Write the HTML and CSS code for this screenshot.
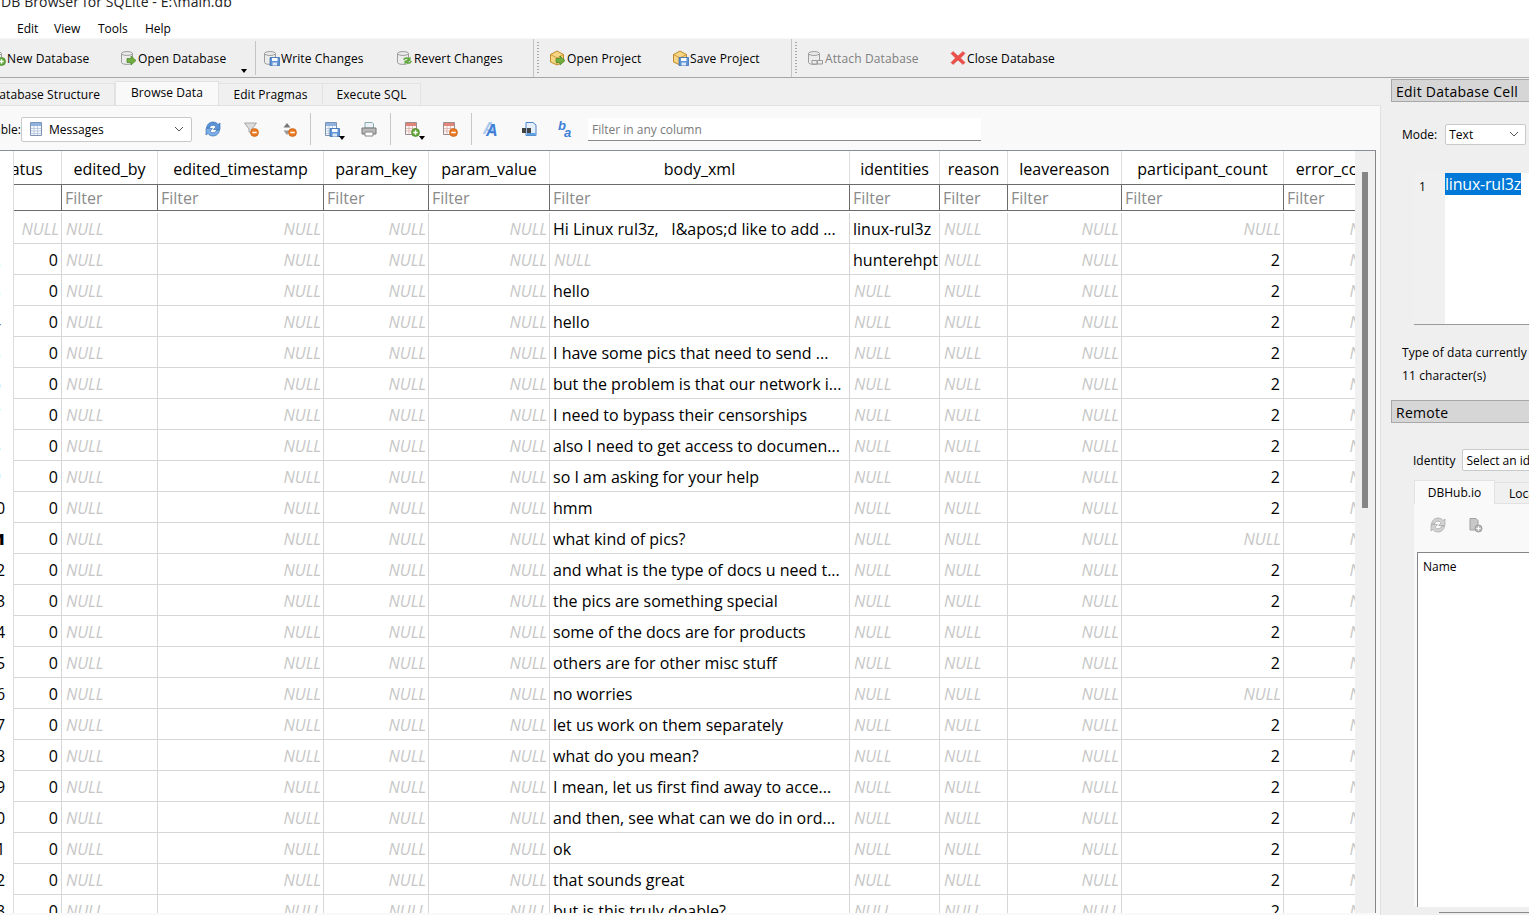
FILE: index.html
```html
<!DOCTYPE html>
<html lang="en">
<head>
<meta charset="utf-8">
<title>DB Browser for SQLite - E:\main.db</title>
<link rel="stylesheet" href="styles.css">
</head>
<body>
<svg class="defs" width="0" height="0" aria-hidden="true">
  <symbol id="cyl" viewBox="0 0 16 16"><path d="M.5 3.500C.5 1 11.500 1 11.500 3.500V12.500C11.500 15 .5 15 .5 12.500Z" fill="#ececec" stroke="#9c9c9c"/><path d="M.5 3.500C.5 6 11.500 6 11.500 3.500" fill="none" stroke="#9c9c9c"/></symbol>
  <symbol id="greenarrow" viewBox="0 0 16 16"><path d="M6 8.500H10V6L15 10.500L10 15V12.500H6Z" fill="#6fae3f" stroke="#4a8526" stroke-width=".7"/></symbol>
  <symbol id="floppy" viewBox="0 0 16 16"><path d="M6 7.500H15.500V15.500H6Z" fill="#5f94d6" stroke="#2f65ab" stroke-width=".7"/><path d="M8 8H13.500V11H8Z" fill="#fff"/><path d="M8.500 12.500H13V15.500H8.500Z" fill="#dfe9f5"/></symbol>
  <symbol id="box" viewBox="0 0 16 16"><path d="M.5 4.500L7 1L13.500 4.500V12L7 15L.5 12Z" fill="#f5d583" stroke="#c08a2b"/><path d="M.5 4.500L7 8L13.500 4.500M7 8V15" fill="none" stroke="#c08a2b" stroke-width=".8"/></symbol>
  <symbol id="tbl" viewBox="0 0 16 16"><path d="M1.500 1.500H12.500V14.500H1.500Z" fill="#f4f7fb" stroke="#7c93b2"/><path d="M2 2H12V5H2Z" fill="#8fb3de"/><path d="M2 7.500H12M2 10H12M2 12.500H12M5 5V14M8.500 5V14" stroke="#a9bdd6" stroke-width=".7"/></symbol>
  <symbol id="rtbl" viewBox="0 0 16 16"><path d="M1.500 1.500H12.500V13.500H1.500Z" fill="#fdf6f4" stroke="#9a8d8d"/><path d="M2 2H12V5H2Z" fill="#e2857a"/><path d="M2 7.500H12M2 10H12M5 5V13M8.500 5V13" stroke="#d3aaa5" stroke-width=".7"/></symbol>
  <symbol id="plus" viewBox="0 0 16 16"><circle cx="11.500" cy="11.500" r="4" fill="#63a83a" stroke="#3f7d20" stroke-width=".6"/><path d="M9.300 11.500H13.700M11.500 9.300V13.700" stroke="#fff" stroke-width="1.400"/></symbol>
  <symbol id="minus" viewBox="0 0 16 16"><circle cx="11.500" cy="11.500" r="4" fill="#ec7a22" stroke="#c05a10" stroke-width=".6"/><path d="M9.300 11.500H13.700" stroke="#fff" stroke-width="1.500"/></symbol>
  <symbol id="refresh" viewBox="0 0 16 16"><path d="M1.500 7C2 3 5 1 8 1C10.500 1 12 2 13 3.500L15 2V8.500H8.500L11 6C10.300 5 9.500 4.200 8 4.200C6.200 4.200 4.800 5.300 4.500 7Z" fill="#5b93d8" stroke="#2d66ad" stroke-width=".6"/><path d="M14.500 9C14 13 11 15 8 15C5.500 15 4 14 3 12.500L1 14V7.500H7.500L5 10C5.700 11 6.500 11.800 8 11.800C9.800 11.800 11.200 10.700 11.500 9Z" fill="#7aaee6" stroke="#2d66ad" stroke-width=".6"/></symbol>
  <symbol id="grefresh" viewBox="0 0 16 16"><path d="M1.500 7C2 3 5 1 8 1C10.500 1 12 2 13 3.500L15 2V8.500H8.500L11 6C10.300 5 9.500 4.200 8 4.200C6.200 4.200 4.800 5.300 4.500 7Z" fill="#d2d2d2" stroke="#9a9a9a" stroke-width=".6"/><path d="M14.500 9C14 13 11 15 8 15C5.500 15 4 14 3 12.500L1 14V7.500H7.500L5 10C5.700 11 6.500 11.800 8 11.800C9.800 11.800 11.200 10.700 11.500 9Z" fill="#d2d2d2" stroke="#9a9a9a" stroke-width=".6"/></symbol>
</svg>

<div class="app">
  <div class="titlebar">DB Browser for SQLite - E:\main.db</div>
  <div class="menubar"><span>Edit</span><span>View</span><span>Tools</span><span>Help</span></div>

  <div class="toolbar">
    <div class="tool"><svg class="ic"><use href="#cyl"/><use href="#plus"/></svg>New Database</div>
    <div class="tool"><svg class="ic"><use href="#cyl"/><use href="#greenarrow"/></svg>Open Database</div>
    <div class="drop"><i class="caret"></i></div>
    <div class="sep"></div>
    <div class="tool"><svg class="ic"><use href="#cyl"/><use href="#floppy"/></svg>Write Changes</div>
    <div class="tool"><svg class="ic"><use href="#cyl"/><path d="M6 9.500C7 7 10 6.500 12 8L13.500 6.500V11H9L10.500 9.500C9.500 8.800 8 9 7.500 10Z" fill="#5fa83a"/><path d="M15 11C14 14 11 14.500 9 13L7.500 14.500V10.500H12L10.500 12C11.500 12.700 12.800 12.300 13.300 11Z" fill="#5fa83a"/></svg>Revert Changes</div>
    <div class="sep handle"></div>
    <div class="tool"><svg class="ic"><use href="#box"/><use href="#greenarrow"/></svg>Open Project</div>
    <div class="tool"><svg class="ic"><use href="#box"/><use href="#floppy"/></svg>Save Project</div>
    <div class="sep handle"></div>
    <div class="tool off"><svg class="ic"><use href="#cyl"/><path d="M4 10.500H9V14H4ZM9.500 10.500H14.500V14H9.500Z" fill="#eee" stroke="#999"/></svg>Attach Database</div>
    <div class="tool"><svg class="ic"><path d="M3 1.500L8 6L13 1.500L15 3.500L10.500 8L15 12.500L13 14.500L8 10L3 14.500L1 12.500L5.500 8L1 3.500Z" fill="#ee4f4a" stroke="#d33a35" stroke-width=".5"/></svg>Close Database</div>
  </div>

  <div class="main">
    <div class="left">
      <div class="tabs">
        <div class="tab t-struct">Database Structure</div>
        <div class="tab active t-browse">Browse Data</div>
        <div class="tab t-prag">Edit Pragmas</div>
        <div class="tab t-sql">Execute SQL</div>
      </div>
      <div class="page">
        <div class="subbar">
          <span class="tlabel">Table:</span>
          <div class="combo c-table"><svg class="ic"><use href="#tbl"/></svg><span class="grow">Messages</span><svg class="chev" viewBox="0 0 10 6"><path d="M1 1L5 5L9 1" fill="none" stroke="#555"/></svg></div>
          <div class="sb s-a"><svg class="ic"><use href="#refresh"/></svg></div>
          <div class="sb s-b"><svg class="ic"><path d="M1.500 2H13.500L9 8V13L6 11V8Z" fill="#dcdcdc" stroke="#a6a6a6"/><use href="#minus"/></svg></div>
          <div class="sb s-c"><svg class="ic"><path d="M6 2L9.500 6.500H2.500Z" fill="#777"/><path d="M6 14L9.500 9.500H2.500Z" fill="#999"/><use href="#minus"/></svg></div>
          <div class="vsep"></div>
          <div class="sb s-d"><svg class="ic"><use href="#tbl"/><use href="#floppy"/></svg><i class="caret under"></i></div>
          <div class="sb s-e"><svg class="ic"><path d="M4 1.500H11L12.500 3V7H4Z" fill="#eef3f9" stroke="#8aa"/><path d="M1 7H15V13H1Z" fill="#b8b8b8" stroke="#777"/><path d="M4 11H12V15H4Z" fill="#fff" stroke="#888"/></svg></div>
          <div class="vsep"></div>
          <div class="sb s-f"><svg class="ic"><use href="#rtbl"/><use href="#plus"/></svg><i class="caret under"></i></div>
          <div class="sb s-g"><svg class="ic"><use href="#rtbl"/><use href="#minus"/></svg></div>
          <div class="vsep"></div>
          <div class="sb s-h"><svg class="ic" viewBox="0 0 16 16"><text x="-1" y="13" class="ictext back">A</text><text x="2" y="15" class="ictext">A</text></svg></div>
          <div class="sb s-i"><svg class="ic"><path d="M5 1.500H12L15 4V14.500H5Z" fill="#e6f0fa" stroke="#4d86c8"/><path d="M6 12H14.500V14.500H6Z" fill="#5fa0e0"/><path d="M1 7H5V12H1ZM6 7H10V12H6Z" fill="#444"/></svg></div>
          <div class="sb s-j"><svg class="ic" viewBox="0 0 16 16"><text x="0" y="9" class="ictext sm">b</text><text x="6" y="16" class="ictext sm">a</text></svg></div>
          <input class="filter-any" placeholder="Filter in any column">
        </div>

        <div class="gridframe">
          <div class="rowhead">
            <div class="rh-top"></div>
            <div class="rh">1</div><div class="rh">2</div><div class="rh">3</div><div class="rh">4</div><div class="rh">5</div><div class="rh">6</div><div class="rh">7</div><div class="rh">8</div><div class="rh">9</div><div class="rh">10</div><div class="rh cur">11</div><div class="rh">12</div><div class="rh">13</div><div class="rh">14</div><div class="rh">15</div><div class="rh">16</div><div class="rh">17</div><div class="rh">18</div><div class="rh">19</div><div class="rh">20</div><div class="rh">21</div><div class="rh">22</div><div class="rh">23</div>
          </div>
          <div class="viewport">
            <table class="grid">
              <colgroup><col class="c1"><col class="c2"><col class="c3"><col class="c4"><col class="c5"><col class="c6"><col class="c7"><col class="c8"><col class="c9"><col class="c10"><col class="c11"></colgroup>
              <thead>
                <tr class="hd"><th>status</th><th>edited_by</th><th>edited_timestamp</th><th>param_key</th><th>param_value</th><th>body_xml</th><th>identities</th><th>reason</th><th>leavereason</th><th>participant_count</th><th>error_code</th></tr>
                <tr class="fl"><td></td><td><input placeholder="Filter"></td><td><input placeholder="Filter"></td><td><input placeholder="Filter"></td><td><input placeholder="Filter"></td><td><input placeholder="Filter"></td><td><input placeholder="Filter"></td><td><input placeholder="Filter"></td><td><input placeholder="Filter"></td><td><input placeholder="Filter"></td><td><input placeholder="Filter"></td></tr>
                <tr class="gap"><td colspan="11"></td></tr>
              </thead>
              <tbody>
                <tr><td class="r n">NULL</td><td class="n">NULL</td><td class="r n">NULL</td><td class="r n">NULL</td><td class="r n">NULL</td><td>Hi Linux rul3z, &nbsp; I&amp;apos;d like to add ...</td><td>linux-rul3z</td><td class="n">NULL</td><td class="r n">NULL</td><td class="r n">NULL</td><td class="r n">NULL</td></tr>
                <tr><td class="r">0</td><td class="n">NULL</td><td class="r n">NULL</td><td class="r n">NULL</td><td class="r n">NULL</td><td class="n">NULL</td><td>hunterehpt</td><td class="n">NULL</td><td class="r n">NULL</td><td class="r">2</td><td class="r n">NULL</td></tr>
                <tr><td class="r">0</td><td class="n">NULL</td><td class="r n">NULL</td><td class="r n">NULL</td><td class="r n">NULL</td><td>hello</td><td class="n">NULL</td><td class="n">NULL</td><td class="r n">NULL</td><td class="r">2</td><td class="r n">NULL</td></tr>
                <tr><td class="r">0</td><td class="n">NULL</td><td class="r n">NULL</td><td class="r n">NULL</td><td class="r n">NULL</td><td>hello</td><td class="n">NULL</td><td class="n">NULL</td><td class="r n">NULL</td><td class="r">2</td><td class="r n">NULL</td></tr>
                <tr><td class="r">0</td><td class="n">NULL</td><td class="r n">NULL</td><td class="r n">NULL</td><td class="r n">NULL</td><td>I have some pics that need to send ...</td><td class="n">NULL</td><td class="n">NULL</td><td class="r n">NULL</td><td class="r">2</td><td class="r n">NULL</td></tr>
                <tr><td class="r">0</td><td class="n">NULL</td><td class="r n">NULL</td><td class="r n">NULL</td><td class="r n">NULL</td><td>but the problem is that our network i...</td><td class="n">NULL</td><td class="n">NULL</td><td class="r n">NULL</td><td class="r">2</td><td class="r n">NULL</td></tr>
                <tr><td class="r">0</td><td class="n">NULL</td><td class="r n">NULL</td><td class="r n">NULL</td><td class="r n">NULL</td><td>I need to bypass their censorships</td><td class="n">NULL</td><td class="n">NULL</td><td class="r n">NULL</td><td class="r">2</td><td class="r n">NULL</td></tr>
                <tr><td class="r">0</td><td class="n">NULL</td><td class="r n">NULL</td><td class="r n">NULL</td><td class="r n">NULL</td><td>also I need to get access to documen...</td><td class="n">NULL</td><td class="n">NULL</td><td class="r n">NULL</td><td class="r">2</td><td class="r n">NULL</td></tr>
                <tr><td class="r">0</td><td class="n">NULL</td><td class="r n">NULL</td><td class="r n">NULL</td><td class="r n">NULL</td><td>so I am asking for your help</td><td class="n">NULL</td><td class="n">NULL</td><td class="r n">NULL</td><td class="r">2</td><td class="r n">NULL</td></tr>
                <tr><td class="r">0</td><td class="n">NULL</td><td class="r n">NULL</td><td class="r n">NULL</td><td class="r n">NULL</td><td>hmm</td><td class="n">NULL</td><td class="n">NULL</td><td class="r n">NULL</td><td class="r">2</td><td class="r n">NULL</td></tr>
                <tr><td class="r">0</td><td class="n">NULL</td><td class="r n">NULL</td><td class="r n">NULL</td><td class="r n">NULL</td><td>what kind of pics?</td><td class="n">NULL</td><td class="n">NULL</td><td class="r n">NULL</td><td class="r n">NULL</td><td class="r n">NULL</td></tr>
                <tr><td class="r">0</td><td class="n">NULL</td><td class="r n">NULL</td><td class="r n">NULL</td><td class="r n">NULL</td><td>and what is the type of docs u need t...</td><td class="n">NULL</td><td class="n">NULL</td><td class="r n">NULL</td><td class="r">2</td><td class="r n">NULL</td></tr>
                <tr><td class="r">0</td><td class="n">NULL</td><td class="r n">NULL</td><td class="r n">NULL</td><td class="r n">NULL</td><td>the pics are something special</td><td class="n">NULL</td><td class="n">NULL</td><td class="r n">NULL</td><td class="r">2</td><td class="r n">NULL</td></tr>
                <tr><td class="r">0</td><td class="n">NULL</td><td class="r n">NULL</td><td class="r n">NULL</td><td class="r n">NULL</td><td>some of the docs are for products</td><td class="n">NULL</td><td class="n">NULL</td><td class="r n">NULL</td><td class="r">2</td><td class="r n">NULL</td></tr>
                <tr><td class="r">0</td><td class="n">NULL</td><td class="r n">NULL</td><td class="r n">NULL</td><td class="r n">NULL</td><td>others are for other misc stuff</td><td class="n">NULL</td><td class="n">NULL</td><td class="r n">NULL</td><td class="r">2</td><td class="r n">NULL</td></tr>
                <tr><td class="r">0</td><td class="n">NULL</td><td class="r n">NULL</td><td class="r n">NULL</td><td class="r n">NULL</td><td>no worries</td><td class="n">NULL</td><td class="n">NULL</td><td class="r n">NULL</td><td class="r n">NULL</td><td class="r n">NULL</td></tr>
                <tr><td class="r">0</td><td class="n">NULL</td><td class="r n">NULL</td><td class="r n">NULL</td><td class="r n">NULL</td><td>let us work on them separately</td><td class="n">NULL</td><td class="n">NULL</td><td class="r n">NULL</td><td class="r">2</td><td class="r n">NULL</td></tr>
                <tr><td class="r">0</td><td class="n">NULL</td><td class="r n">NULL</td><td class="r n">NULL</td><td class="r n">NULL</td><td>what do you mean?</td><td class="n">NULL</td><td class="n">NULL</td><td class="r n">NULL</td><td class="r">2</td><td class="r n">NULL</td></tr>
                <tr><td class="r">0</td><td class="n">NULL</td><td class="r n">NULL</td><td class="r n">NULL</td><td class="r n">NULL</td><td>I mean, let us first find away to acce...</td><td class="n">NULL</td><td class="n">NULL</td><td class="r n">NULL</td><td class="r">2</td><td class="r n">NULL</td></tr>
                <tr><td class="r">0</td><td class="n">NULL</td><td class="r n">NULL</td><td class="r n">NULL</td><td class="r n">NULL</td><td>and then, see what can we do in ord...</td><td class="n">NULL</td><td class="n">NULL</td><td class="r n">NULL</td><td class="r">2</td><td class="r n">NULL</td></tr>
                <tr><td class="r">0</td><td class="n">NULL</td><td class="r n">NULL</td><td class="r n">NULL</td><td class="r n">NULL</td><td>ok</td><td class="n">NULL</td><td class="n">NULL</td><td class="r n">NULL</td><td class="r">2</td><td class="r n">NULL</td></tr>
                <tr><td class="r">0</td><td class="n">NULL</td><td class="r n">NULL</td><td class="r n">NULL</td><td class="r n">NULL</td><td>that sounds great</td><td class="n">NULL</td><td class="n">NULL</td><td class="r n">NULL</td><td class="r">2</td><td class="r n">NULL</td></tr>
                <tr><td class="r">0</td><td class="n">NULL</td><td class="r n">NULL</td><td class="r n">NULL</td><td class="r n">NULL</td><td>but is this truly doable?</td><td class="n">NULL</td><td class="n">NULL</td><td class="r n">NULL</td><td class="r">2</td><td class="r n">NULL</td></tr>
              </tbody>
            </table>
          </div>
          <div class="vscroll"><div class="thumb"></div></div>
        </div>
      </div>
    </div>

    <aside class="dock">
      <div class="docktitle first">Edit Database Cell</div>
      <div class="moderow"><span>Mode:</span><div class="combo c-mode"><span class="grow">Text</span><svg class="chev" viewBox="0 0 10 6"><path d="M1 1L5 5L9 1" fill="none" stroke="#555"/></svg></div></div>
      <div class="editor"><div class="gutter">1</div><div class="code"><span class="sel">linux-rul3z</span></div></div>
      <div class="info"><div>Type of data currently in cell: Text / Numeric</div><div>11 character(s)</div></div>
      <div class="docktitle remote">Remote</div>
      <div class="identrow"><span>Identity</span><div class="combo c-ident">Select an identity to connect</div></div>
      <div class="rtabs"><div class="rtab active">DBHub.io</div><div class="rtab">Local</div></div>
      <div class="rpane">
        <div class="ricons"><svg class="ic"><use href="#grefresh"/></svg><svg class="ic"><path d="M3 1.500H9L11 3.500V13H3Z" fill="#c8c8c8" stroke="#a0a0a0"/><circle cx="11.500" cy="11.500" r="3.500" fill="#bdbdbd" stroke="#999"/><path d="M9.500 11.500H13.500M11.500 9.500V13.500" stroke="#fff"/></svg></div>
        <div class="rlist"><div class="rhead">Name</div></div>
      </div>
      <div class="rfoot"></div>
    </aside>
  </div>
</div>
</body>
</html>
```
FILE: styles.css
```css
* { box-sizing: border-box; }
html, body { margin: 0; padding: 0; }
body { width: 1529px; height: 915px; overflow: hidden; background: #fff; font-family: "Open Sans", "Noto Sans", sans-serif; font-size: 12px; color: #000; }
.defs { position: absolute; }
.app { width: 1529px; height: 915px; display: flex; flex-direction: column; overflow: hidden; }

.titlebar { height: 20px; flex: none; padding-left: 1px; font-size: 14px; letter-spacing: .1px; line-height: 4px; color: #222; white-space: nowrap; overflow: hidden; }
.menubar { height: 18px; flex: none; display: flex; background: #fff; line-height: 17px; }
.menubar span:nth-child(1) { margin-left: 17px; width: 37px; }
.menubar span:nth-child(2) { width: 44px; }
.menubar span:nth-child(3) { width: 47px; }

.toolbar { height: 40px; flex: none; margin-left: -10px; display: grid; grid-template-columns: 131px 119px 15px 9px 133px 136px 17px 123px 118px 17px 142px 1fr; align-items: center; background: #efefef; border-top: 1px solid #f7f7f7; border-bottom: 1px solid #a6a6a6; white-space: nowrap; letter-spacing: .12px; }
.tool { display: flex; align-items: center; gap: 1px; height: 100%; }
.tool.off { color: #808080; }
.ic { width: 16px; height: 16px; flex: none; overflow: visible; }
.drop { height: 100%; position: relative; }
.caret { display: block; width: 0; height: 0; border: 3.500px solid transparent; border-top: 4px solid #000; border-bottom: 0; }
.drop .caret { position: absolute; left: 1px; bottom: 4px; }
.sep { border-left: 1px solid #c4c4c4; margin: 2px 0; height: 34px; }
.sep.handle { height: 38px; margin: 0; position: relative; }
.sep.handle::after { content: ""; position: absolute; left: 3px; top: 3px; bottom: 3px; width: 2px; background: repeating-linear-gradient(#a8a8a8 0 1px, transparent 1px 3px); }

.main { flex: 1; display: flex; min-height: 0; }
.left { width: 1381px; flex: none; display: flex; flex-direction: column; background: #efefef; }

.tabs { height: 27px; flex: none; display: flex; align-items: flex-end; }
.tab { height: 22px; display: flex; align-items: center; justify-content: center; background: #f0f0f0; border: 1px solid #e2e2e2; border-bottom: 0; border-left: 0; white-space: nowrap; letter-spacing: .08px; }
.tab.active { height: 24px; background: #f9f9f9; border-left: 1px solid #e2e2e2; padding-bottom: 3px; position: relative; }
.t-struct { width: 115px; justify-content: flex-end; padding-right: 14px; overflow: hidden; }
.t-browse { width: 104px; }
.t-prag { width: 104px; }
.t-sql { width: 98px; }

.page { flex: 1; min-height: 0; display: flex; flex-direction: column; background: #f9f9f9; border-top: 1px solid #e2e2e2; border-right: 1px solid #e0e0e0; }
.subbar { height: 44px; flex: none; padding-top: 2px; display: flex; align-items: center; position: relative; white-space: nowrap; margin-left: -13px; }
.tlabel { width: 34px; flex: none; text-align: right; }
.combo { display: flex; align-items: center; background: #fff; border: 1px solid #c9c9c9; border-radius: 2px; white-space: nowrap; overflow: hidden; }
.c-table { width: 171px; height: 25px; padding: 0 7px; gap: 4px; flex: none; }
.grow { flex: 1; }
.chev { width: 10px; height: 6px; flex: none; }
.sb { flex: none; position: relative; height: 16px; }
.s-a { margin-left: 13px; }
.s-b { margin-left: 22px; }
.s-c { margin-left: 22px; }
.s-d { margin-left: 13px; }
.s-e { margin-left: 21px; }
.s-f { margin-left: 13px; }
.s-g { margin-left: 22px; }
.s-h { margin-left: 12px; }
.s-i { margin-left: 21px; }
.s-j { margin-left: 21px; }
.vsep { flex: none; width: 1px; height: 32px; background: #c8c8c8; margin-left: 13px; }
.caret.under { position: absolute; left: 15px; top: 15px; }
.ictext { font-family: "Liberation Sans", sans-serif; font-size: 16px; font-weight: 700; font-style: italic; fill: #3f7fd8; }
.ictext.back { fill: #a9c8ee; }
.ictext.sm { font-size: 13px; }
.filter-any { flex: none; width: 393px; height: 23px; margin-left: 14px; padding: 2px 4px 0; border: 0; border-bottom: 1px solid #8a8a8a; background: #fff; font: inherit; outline: 0; }
.filter-any::placeholder { color: #7a7a7a; opacity: 1; }

.gridframe { flex: 1; min-height: 0; display: flex; width: 1376px; background: #f0f0f0; border-top: 1px solid #8a8f96; border-right: 1px solid #85858a; margin-bottom: 2px; position: relative; }
.rowhead { width: 14px; flex: none; background: #fff; border-right: 1px solid #dcdcdc; overflow: hidden; position: relative; font-size: 16px; }
.rh-top { height: 62px; margin-left: -23px; width: 38px; }
.rh { height: 31px; width: 38px; margin-left: -23px; line-height: 32px; text-align: center; }
.rh.cur { font-weight: 800; }
.viewport { width: 1341px; flex: none; overflow: hidden; background: #fff; }
.grid { table-layout: fixed; width: 1411px; margin-left: -35px; border-collapse: separate; border-spacing: 0; font-size: 16px; }
.c1 { width: 83px; } .c2 { width: 96px; } .c3 { width: 166px; } .c4 { width: 105px; } .c5 { width: 121px; } .c6 { width: 300px; } .c7 { width: 90px; } .c8 { width: 68px; } .c9 { width: 114px; } .c10 { width: 162px; } .c11 { width: 106px; }
.grid th { height: 33px; font-weight: 400; padding: 2px 0 0; text-align: center; border-right: 1px solid #dedede; white-space: nowrap; overflow: hidden; }
.grid td { height: 31px; padding: 3px 3px 0; border-right: 1px solid #d6d6d6; border-bottom: 1px solid #d6d6d6; white-space: nowrap; overflow: hidden; line-height: 27px; }
.grid .fl td { height: 27px; padding: 0; border-top: 1px solid #6b6b6b; border-bottom: 1px solid #6b6b6b; border-right: 1px solid #6b6b6b; line-height: 24px; }
.fl input { display: block; width: 100%; height: 24px; border: 0; padding: 0 3px; background: #fff; font: inherit; outline: 0; }
.fl input::placeholder { color: #8a8a8a; opacity: 1; }
.grid .gap td { height: 2px; padding: 0; border: 0; line-height: 0; font-size: 0; }
.grid .r { text-align: right; }
.grid .n { font-style: italic; color: #c6c6c6; padding: 3px 2px 0 4px; }

.vscroll { flex: 1; position: relative; background: #f0f0f0; }
.thumb { width: 6px; height: 336px; margin: 21px 0 0 7px; background: #868686; }

.dock { flex: 1; min-width: 0; background: #efefef; padding-left: 10px; overflow: hidden; white-space: nowrap; }
.docktitle { height: 23px; margin-top: 1px; width: 160px; padding-left: 4px; background: #d6d6d6; border: 1px solid #a8a8a8; border-right: 0; font-size: 14px; letter-spacing: .25px; line-height: 23px; }
.moderow { display: flex; align-items: center; gap: 8px; margin: 21px 0 0 11px; height: 22px; }
.c-mode { width: 81px; height: 21px; padding: 0 6px 0 3px; flex: none; }
.editor { display: flex; height: 152px; width: 130px; margin: 28px 0 0 23px; background: #fff; border-bottom: 1px solid #9a9a9a; }
.gutter { width: 31px; flex: none; background: #f0f0f0; padding: 5px 0 0 5px; }
.code { flex: 1; font-size: 16px; line-height: 21px; letter-spacing: -.2px; }
.sel { display: inline-block; padding-top: 1px; background: #0078d7; color: #fff; }
.info { margin: 16px 0 0 11px; line-height: 23px; letter-spacing: .1px; }
.docktitle.remote { margin-top: 13px; }
.identrow { display: flex; align-items: center; gap: 7px; margin: 26px 0 0 22px; height: 22px; }
.c-ident { width: 160px; height: 22px; padding-left: 3px; flex: none; }
.rtabs { display: flex; height: 24px; margin: 9px 0 0 23px; align-items: flex-end; }
.rtab { flex: none; height: 22px; padding: 0 14px; background: #f0f0f0; border: 1px solid #e2e2e2; border-left: 0; line-height: 22px; }
.rtab.active { width: 81px; height: 24px; background: #f9f9f9; border-left: 1px solid #e2e2e2; border-bottom: 0; text-align: center; padding: 0; line-height: 23px; }
.rpane { margin-left: 23px; width: 140px; height: 402px; background: #f9f9f9; padding-top: 13px; }
.ricons { display: flex; gap: 21px; padding-left: 16px; height: 20px; }
.rlist { height: 355px; margin: 15px 0 0 3px; background: #fff; border: 1px solid #85858a; border-right: 0; border-bottom: 0; }
.rhead { padding: 5px 0 0 5px; }
.rfoot { height: 1px; margin: 6px 0 0 48px; background: #888; }
```
